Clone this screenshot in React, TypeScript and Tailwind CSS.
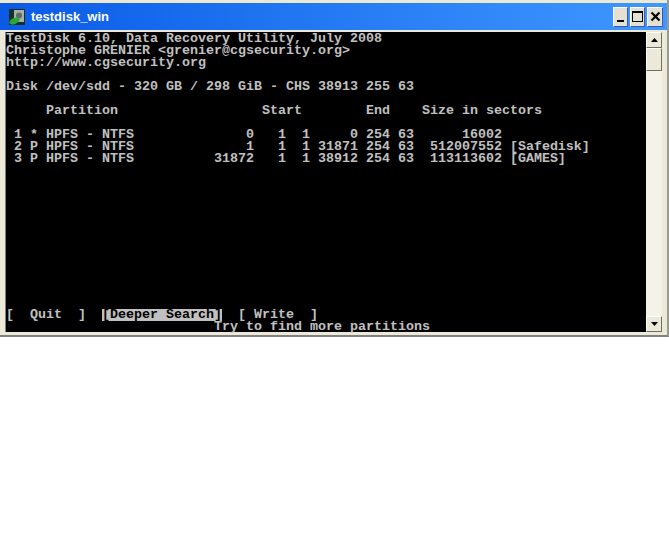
const screen = [
  'TestDisk 6.10, Data Recovery Utility, July 2008',
  'Christophe GRENIER <grenier@cgsecurity.org>',
  'http://www.cgsecurity.org',
  '',
  'Disk /dev/sdd - 320 GB / 298 GiB - CHS 38913 255 63',
  '',
  '     Partition                  Start        End    Size in sectors',
  '',
  ' 1 * HPFS - NTFS              0   1  1     0 254 63      16002',
  ' 2 P HPFS - NTFS              1   1  1 31871 254 63  512007552 [Safedisk]',
  ' 3 P HPFS - NTFS          31872   1  1 38912 254 63  113113602 [GAMES]',
]

function TitleButton({ children, close }: { children: React.ReactNode; close?: boolean }) {
  return (
    <div
      className={`flex h-[20px] items-center justify-center border border-t-[#fff] border-l-[#fff] border-r-[#3c5aa8] border-b-[#3c5aa8] bg-[#e4e1d2] ${
        close ? 'w-[16px]' : 'w-[15px]'
      }`}
    >
      {children}
    </div>
  )
}

function ScrollButton({ up }: { up?: boolean }) {
  return (
    <div className="flex h-[16px] w-[16px] items-center justify-center border border-t-[#fff] border-l-[#fff] border-r-[#716f64] border-b-[#716f64] bg-[#ece9d8]">
      <svg width="7" height="4" viewBox="0 0 7 4">
        <path d={up ? 'M3.5 0 L7 4 L0 4 Z' : 'M0 0 L7 0 L3.5 4 Z'} fill="#000" />
      </svg>
    </div>
  )
}

export default function App() {
  return (
    <div className="h-[542px] w-[669px] overflow-hidden bg-white">
      <div className="flex h-[337px] flex-col border-r-2 border-b-2 border-r-[#9a9a90] border-b-[#808080] bg-[#ece9d8] pt-[3px]">
        <div className="flex h-[27px] items-center bg-gradient-to-r from-[#0a5ae6] to-[#3f98ff] pl-[9px] pr-[4px]">
          <svg width="16" height="16" viewBox="0 0 16 16" className="shrink-0">
            <rect x="0" y="0" width="16" height="16" fill="#14302a" />
            <rect x="5" y="1" width="10" height="12" fill="#a8b0a8" />
            <circle cx="10" cy="6.5" r="3" fill="#5c6c64" />
            <ellipse cx="5.5" cy="12" rx="5.5" ry="3" fill="#2ca838" transform="rotate(-25 5.5 12)" />
          </svg>
          <span className="ml-[6px] font-['Liberation_Sans',sans-serif] text-[13px] font-bold text-white">testdisk_win</span>
          <div className="ml-auto flex gap-[2px]">
            <TitleButton>
              <div className="mt-[9px] h-[2px] w-[7px] bg-black" />
            </TitleButton>
            <TitleButton>
              <div className="h-[11px] w-[11px] border border-t-2 border-black" />
            </TitleButton>
            <TitleButton close>
              <svg width="11" height="11" viewBox="0 0 11 11">
                <path d="M1.5 1.5 L9.5 9.5 M9.5 1.5 L1.5 9.5" stroke="#000" strokeWidth="2.2" />
              </svg>
            </TitleButton>
          </div>
        </div>
        <div className="mt-[2px] flex h-[300px] pl-[5px]">
          <div className="h-[300px] w-[641px] border-l border-l-[#808080] bg-black pt-[1px] font-['Liberation_Mono',monospace] text-[13.33px] font-bold leading-[12px] text-[#c0c0c0]">
            <pre className="font-['Liberation_Mono',monospace] leading-[12px]">{screen.join('\n')}</pre>
            <pre className="mt-[144px] h-[12px] font-['Liberation_Mono',monospace] leading-[12px]">
              {'[  Quit  ]  '}
              <span className="inline-block h-[12px] bg-[#c0c0c0] text-black">[Deeper Search]</span>
              {'  [ Write  ]'}
            </pre>
            <pre className="h-[12px] font-['Liberation_Mono',monospace] leading-[12px]">{'                          Try to find more partitions'}</pre>
          </div>
          <div className="flex h-[300px] w-[16px] flex-col bg-[#f4f3ea]">
            <ScrollButton up />
            <div className="h-[23px] w-[16px] border border-t-[#fff] border-l-[#fff] border-r-[#716f64] border-b-[#716f64] bg-[#ece9d8]" />
            <div className="flex-1" />
            <ScrollButton />
          </div>
        </div>
      </div>
    </div>
  )
}
